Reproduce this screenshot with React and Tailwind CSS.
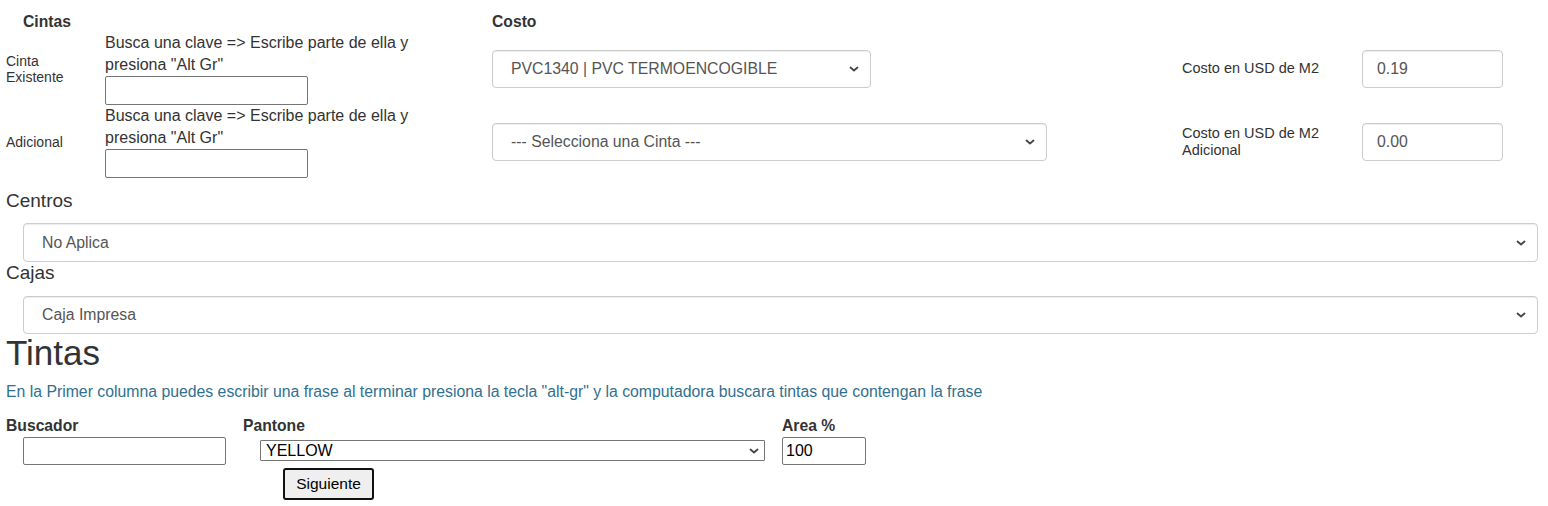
import React from "react";

function Chevron({ className = "" }) {
  return (
    <svg
      className={"pointer-events-none absolute top-1/2 -translate-y-1/2 " + className}
      width="10"
      height="6"
      viewBox="0 0 10 6"
      fill="none"
    >
      <path d="M1.5 1.5l3.5 3 3.5-3" stroke="#444" strokeWidth="1.8" strokeLinecap="round" strokeLinejoin="round" />
    </svg>
  );
}

function BsSelect({ value, className = "" }) {
  return (
    <div className={"relative " + className}>
      <select
        defaultValue={value}
        className="h-[38px] w-full appearance-none rounded-[4px] border border-[#ccc] bg-white pl-[18px] pr-8 text-[15.8px] text-[#555] shadow-[inset_0_1px_1px_rgba(0,0,0,0.075)] outline-none"
      >
        <option>{value}</option>
      </select>
      <Chevron className="right-[12px]" />
    </div>
  );
}

function BsInput({ value }) {
  return (
    <input
      defaultValue={value}
      className="h-[38px] w-[141px] rounded-[4px] border border-[#ccc] bg-white px-[14px] text-[15.8px] text-[#555] shadow-[inset_0_1px_1px_rgba(0,0,0,0.075)] outline-none"
    />
  );
}

function SearchBlock() {
  return (
    <div className="w-[387px] text-[16px] leading-[22px] text-[#333]">
      <p>Busca una clave =&gt; Escribe parte de ella y</p>
      <p>presiona "Alt Gr"</p>
      <input className="h-[29px] w-[203px] rounded-[2px] border border-[#767676] bg-white outline-none" />
    </div>
  );
}

export default function App() {
  return (
    <div className="min-h-screen bg-white pt-[12px] font-['Liberation_Sans',Arial,sans-serif] text-[#333]">
      {/* Cintas / Costo */}
      <div className="flex h-[20px] items-center text-[15.7px] font-bold">
        <span className="w-[492px] pl-[23px]">Cintas</span>
        <span>Costo</span>
      </div>

      <div className="flex items-center pl-[6px]">
        <div className="w-[99px] text-[14px] leading-[16px]">
          Cinta
          <br />
          Existente
        </div>
        <SearchBlock />
        <div className="w-[690px]">
          <BsSelect value="PVC1340 | PVC TERMOENCOGIBLE" className="w-[379px]" />
        </div>
        <div className="w-[180px] text-[14.5px] leading-[17px]">Costo en USD de M2</div>
        <BsInput value="0.19" />
      </div>

      <div className="flex items-center pl-[6px]">
        <div className="w-[99px] text-[14px] leading-[16px]">Adicional</div>
        <SearchBlock />
        <div className="w-[690px]">
          <BsSelect value="--- Selecciona una Cinta ---" className="w-[555px]" />
        </div>
        <div className="w-[180px] text-[14.5px] leading-[17px]">
          Costo en USD de M2
          <br />
          Adicional
        </div>
        <BsInput value="0.00" />
      </div>

      {/* Centros / Cajas */}
      <div className="mt-[12px] pl-[6px] text-[19px] leading-[22px]">Centros</div>
      <div className="pl-[23px] pr-[10px] pt-[11px]">
        <BsSelect value="No Aplica" className="[&_select]:h-[39px]" />
      </div>
      <div className="pl-[6px] text-[19px] leading-[22px]">Cajas</div>
      <div className="pl-[23px] pr-[10px] pt-[12px]">
        <BsSelect value="Caja Impresa" />
      </div>

      {/* Tintas */}
      <h1 className="pl-[6px] text-[35px] leading-[38px] text-[#333]">Tintas</h1>
      <p className="mt-[10px] pl-[6px] text-[15.8px] leading-[20px] text-[#31708f]">
        En la Primer columna puedes escribir una frase al terminar presiona la tecla "alt-gr" y la
        computadora buscara tintas que contengan la frase
      </p>

      <div className="mt-[15px] flex pl-[6px]">
        <div className="w-[237px]">
          <div className="text-[15.7px] font-bold leading-[17px]">Buscador</div>
          <input className="ml-[17px] mt-[3px] h-[28px] w-[203px] rounded-[2px] border border-[#767676] bg-white outline-none" />
        </div>
        <div className="w-[539px]">
          <div className="text-[15.7px] font-bold leading-[17px]">Pantone</div>
          <div className="relative ml-[17px] mt-[5px] w-[505px]">
            <select
              defaultValue="YELLOW"
              className="h-[21px] w-full appearance-none rounded-[1px] border border-[#767676] bg-white pl-[5px] text-[16px] leading-[19px] text-black outline-none"
            >
              <option>YELLOW</option>
            </select>
            <Chevron className="right-[6px]" />
          </div>
          <button className="ml-[40px] mt-[5px] h-[32px] w-[91px] rounded-[3px] border-2 border-[#111] bg-[#efefef] text-[15.5px] text-black">
            Siguiente
          </button>
        </div>
        <div>
          <div className="text-[15.7px] font-bold leading-[17px]">Area %</div>
          <input
            defaultValue="100"
            className="mt-[3px] h-[28px] w-[84px] rounded-[2px] border border-[#767676] bg-white px-[3px] text-[16px] text-black outline-none"
          />
        </div>
      </div>
    </div>
  );
}
